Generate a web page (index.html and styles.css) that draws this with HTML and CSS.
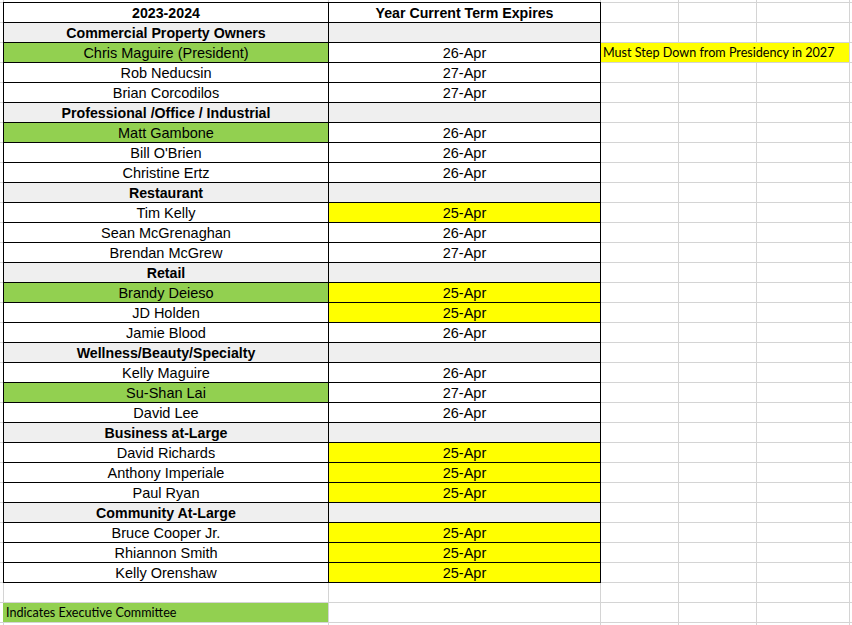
FILE: index.html
```html
<!DOCTYPE html>
<html lang="en">
<head>
<meta charset="utf-8">
<title>Board 2023-2024</title>
<link rel="stylesheet" href="styles.css">
</head>
<body>
<div class="sheet">
  <div class="board">
    <div class="cell bold">2023-2024</div><div class="cell bold">Year Current Term Expires</div>
    <div class="cell bold section">Commercial Property Owners</div><div class="cell section"></div>
    <div class="cell exec">Chris Maguire (President)</div><div class="cell">26-Apr</div>
    <div class="cell">Rob Neducsin</div><div class="cell">27-Apr</div>
    <div class="cell">Brian Corcodilos</div><div class="cell">27-Apr</div>
    <div class="cell bold section">Professional /Office / Industrial</div><div class="cell section"></div>
    <div class="cell exec">Matt Gambone</div><div class="cell">26-Apr</div>
    <div class="cell">Bill O'Brien</div><div class="cell">26-Apr</div>
    <div class="cell">Christine Ertz</div><div class="cell">26-Apr</div>
    <div class="cell bold section">Restaurant</div><div class="cell section"></div>
    <div class="cell">Tim Kelly</div><div class="cell due">25-Apr</div>
    <div class="cell">Sean McGrenaghan</div><div class="cell">26-Apr</div>
    <div class="cell">Brendan McGrew</div><div class="cell">27-Apr</div>
    <div class="cell bold section">Retail</div><div class="cell section"></div>
    <div class="cell exec">Brandy Deieso</div><div class="cell due">25-Apr</div>
    <div class="cell">JD Holden</div><div class="cell due">25-Apr</div>
    <div class="cell">Jamie Blood</div><div class="cell">26-Apr</div>
    <div class="cell bold section">Wellness/Beauty/Specialty</div><div class="cell section"></div>
    <div class="cell">Kelly Maguire</div><div class="cell">26-Apr</div>
    <div class="cell exec">Su-Shan Lai</div><div class="cell">27-Apr</div>
    <div class="cell">David Lee</div><div class="cell">26-Apr</div>
    <div class="cell bold section">Business at-Large</div><div class="cell section"></div>
    <div class="cell">David Richards</div><div class="cell due">25-Apr</div>
    <div class="cell">Anthony Imperiale</div><div class="cell due">25-Apr</div>
    <div class="cell">Paul Ryan</div><div class="cell due">25-Apr</div>
    <div class="cell bold section">Community At-Large</div><div class="cell section"></div>
    <div class="cell">Bruce Cooper Jr.</div><div class="cell due">25-Apr</div>
    <div class="cell">Rhiannon Smith</div><div class="cell due">25-Apr</div>
    <div class="cell">Kelly Orenshaw</div><div class="cell due">25-Apr</div>
  </div>
  <div class="note">Must Step Down from Presidency in 2027</div>
  <div class="legend">Indicates Executive Committee</div>
</div>
</body>
</html>
```

FILE: styles.css
```css
html, body {
  margin: 0;
  padding: 0;
  background: #fff;
}

.sheet {
  width: 852px;
  height: 625px;
  overflow: hidden;
  box-sizing: border-box;
  padding-top: 2px;
  display: grid;
  grid-template-columns: 3px 325px 272px 78px 78px 93px 3px;
  grid-template-rows: repeat(32, 20px);
  background-color: #fff;
  background-image:
    linear-gradient(to right,
      transparent 0 3px, #d4d4d4 3px 4px,
      transparent 4px 328px, #d4d4d4 328px 329px,
      transparent 329px 600px, #d4d4d4 600px 601px,
      transparent 601px 678px, #d4d4d4 678px 679px,
      transparent 679px 756px, #d4d4d4 756px 757px,
      transparent 757px 849px, #d4d4d4 849px 850px,
      transparent 850px),
    linear-gradient(to bottom, #d4d4d4 0 1px, transparent 1px);
  background-size: 100% 100%, 100% 20px;
  background-position: 0 0, 0 2px;
  background-repeat: no-repeat, repeat;
}

.board {
  grid-column: 2 / 4;
  grid-row: 1 / 30;
  margin-right: -1px;
  margin-bottom: -1px;
  display: grid;
  grid-template-columns: 325px 272px;
  grid-auto-rows: 20px;
  border-top: 1px solid #000;
  border-left: 1px solid #000;
  background: #fff;
  font-family: "Liberation Sans", Arial, sans-serif;
  font-size: 14.5px;
  color: #000;
}

.cell {
  box-sizing: border-box;
  border-right: 1px solid #000;
  border-bottom: 1px solid #000;
  text-align: center;
  line-height: 21px;
  white-space: nowrap;
  overflow: hidden;
}

.bold {
  font-weight: bold;
  font-size: 14.2px;
}

.section {
  background: #efefef;
}

.exec {
  background: #92d050;
}

.due {
  background: #ffff00;
}

.note {
  grid-column: 4 / 7;
  grid-row: 3;
  margin: 1px 0 0 1px;
  height: 19px;
  background: #ffff00;
  font-family: Lato, "Open Sans", sans-serif;
  font-size: 12.6px;
  line-height: 20px;
  padding-left: 2px;
  white-space: nowrap;
  color: #000;
}

.legend {
  grid-column: 2;
  grid-row: 31;
  margin-top: 1px;
  height: 19px;
  background: #92d050;
  font-family: Lato, "Open Sans", sans-serif;
  font-size: 12.6px;
  line-height: 20px;
  padding-left: 3px;
  white-space: nowrap;
  color: #000;
}
```
